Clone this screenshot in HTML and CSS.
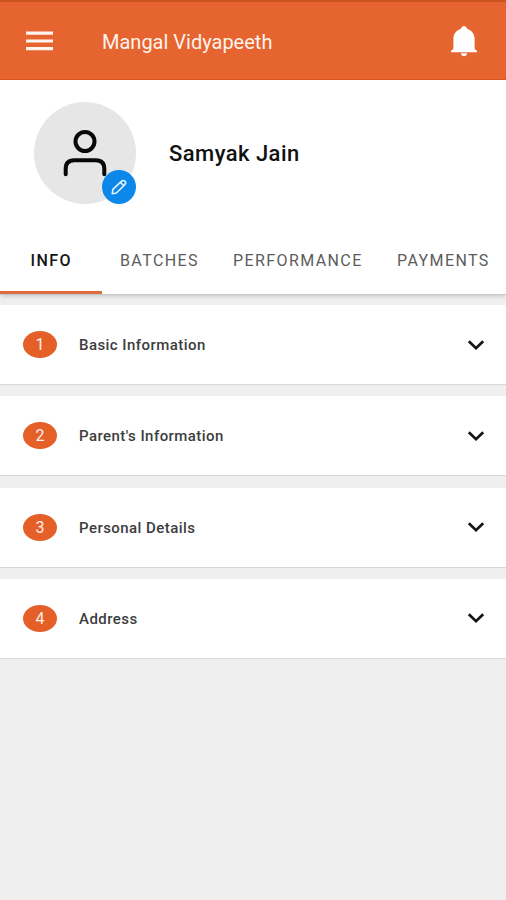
FILE: index.html
```html
<!DOCTYPE html>
<html lang="en">
<head>
<meta charset="utf-8">
<title>Mangal Vidyapeeth</title>
<link rel="stylesheet" href="styles.css">
</head>
<body>
<header class="appbar">
  <svg class="menu" viewBox="0 0 27 20"><path d="M0 2.200h27M0 10h27M0 17.600h27"/></svg>
  <h1 class="title">Mangal Vidyapeeth</h1>
  <svg class="bell" viewBox="0 0 26 31"><path d="M13 0c-1.700 0-2.700 1.200-3.100 2.700C5.500 4.200 2.400 8 2.400 12.500V23L0 24.700V26.200h26v-1.500L23.600 23V12.500c0-4.500-3.100-8.300-7.500-9.800C15.700 1.200 14.700 0 13 0zM9.800 27.200c.4 1.800 1.600 3 3.200 3s2.800-1.200 3.200-3z"/></svg>
</header>
<section class="profile">
  <div class="avatar">
    <svg class="person" viewBox="0 0 44 50"><circle cx="22" cy="12.500" r="9.500"/><path d="M2.700 45.300v-5.500q0-8.500 8.500-8.500h21.600q8.500 0 8.500 8.500v5.500"/></svg>
    <span class="edit"><svg viewBox="0 0 18 18"><path d="M2.200 15.700l.7-4.300 8.700-8.300q1.600-1.300 3.200.1t.2 3.300L6.400 15z M10.400 4.300l3.300 3.400"/></svg></span>
  </div>
  <h2 class="name">Samyak Jain</h2>
</section>
<nav class="tabs">
  <a class="tab active">INFO</a>
  <a class="tab batches">BATCHES</a>
  <a class="tab performance">PERFORMANCE</a>
  <a class="tab payments">PAYMENTS</a>
</nav>
<main class="cards">
  <section class="card"><span class="num">1</span><span class="label">Basic Information</span><svg class="chev" viewBox="0 0 18 12"><path d="M1.800 2.200L9 9.200l7.200-7"/></svg></section>
  <section class="card"><span class="num">2</span><span class="label">Parent's Information</span><svg class="chev" viewBox="0 0 18 12"><path d="M1.800 2.200L9 9.200l7.200-7"/></svg></section>
  <section class="card"><span class="num">3</span><span class="label">Personal Details</span><svg class="chev" viewBox="0 0 18 12"><path d="M1.800 2.200L9 9.200l7.200-7"/></svg></section>
  <section class="card"><span class="num">4</span><span class="label">Address</span><svg class="chev" viewBox="0 0 18 12"><path d="M1.800 2.200L9 9.200l7.200-7"/></svg></section>
</main>
</body>
</html>
```
FILE: styles.css
```css
* { box-sizing: border-box; }
html { background: #efefef; }
body {
  margin: 0;
  min-height: 900px;
  background: #efefef;
  font-family: Roboto, sans-serif;
  overflow: hidden;
}
svg { display: block; fill: none; }
h1, h2 { margin: 0; }

.appbar {
  display: flex;
  align-items: center;
  height: 80px;
  padding: 2px 29px 0 26px;
  background: #e6642f;
  border-top: 2px solid #c9541f;
  border-bottom: 1px solid #dc5317;
}
.menu { width: 27px; height: 20px; margin-bottom: 2px; stroke: #fff5ee; stroke-width: 3.200; }
.title {
  flex: 1;
  margin-left: 49px;
  color: #fff3ec;
  font-size: 20px;
  font-weight: 400;
  line-height: 24px;
}
.bell { width: 26px; height: 31px; fill: #fff; }

.profile {
  display: flex;
  height: 146px;
  padding: 22px 0 0 34px;
  background: #fff;
}
.avatar {
  position: relative;
  width: 102px;
  height: 102px;
  padding: 27px 29px;
  border-radius: 50%;
  background: #e6e6e6;
}
.person {
  width: 44px;
  height: 50px;
  stroke: #080808;
  stroke-width: 4;
  stroke-linecap: round;
}
.edit {
  position: absolute;
  right: 0;
  bottom: 0;
  width: 34px;
  height: 34px;
  padding: 8px;
  border-radius: 50%;
  background: #0c87ea;
}
.edit svg { width: 18px; height: 18px; stroke: #e6f4ff; stroke-width: 1.600; stroke-linejoin: round; }
.name {
  margin: 38px 0 0 33px;
  color: #111;
  font-size: 22px;
  font-weight: 500;
  letter-spacing: .450px;
  line-height: 28px;
}

.tabs {
  display: flex;
  height: 69px;
  background: #fff;
  border-bottom: 1px solid #c9c9c9;
  box-shadow: 0 3px 3px -1px rgba(0, 0, 0, .13);
}
.tab {
  height: 68px;
  padding-top: 24px;
  color: #5c5c5c;
  font-size: 16px;
  letter-spacing: 1.400px;
  line-height: 22px;
  white-space: nowrap;
}
.active {
  width: 102px;
  padding-left: 30.500px;
  color: #161616;
  font-weight: 500;
  border-bottom: 3px solid #df6c40;
}
.batches { width: 131px; padding-left: 18px; }
.performance { width: 164px; }
.payments { width: 109px; }

.cards {
  display: flex;
  flex-direction: column;
  gap: 12.300px;
  padding-top: 10px;
}
.card {
  display: flex;
  align-items: center;
  height: 79px;
  padding: 0 21px 0 23px;
  background: #fff;
  box-shadow: 0 1px 1px rgba(0, 0, 0, .09);
}
.num {
  width: 34px;
  height: 27px;
  border-radius: 50%;
  background: #e55f29;
  color: #fff1e9;
  font-size: 16px;
  line-height: 28px;
  text-align: center;
}
.label {
  flex: 1;
  margin-left: 22px;
  padding-top: 1px;
  color: #3d3d3d;
  font-size: 15px;
  font-weight: 500;
  letter-spacing: .440px;
  line-height: 20px;
}
.chev { width: 18px; height: 12px; stroke: #151515; stroke-width: 2.700; }
```
